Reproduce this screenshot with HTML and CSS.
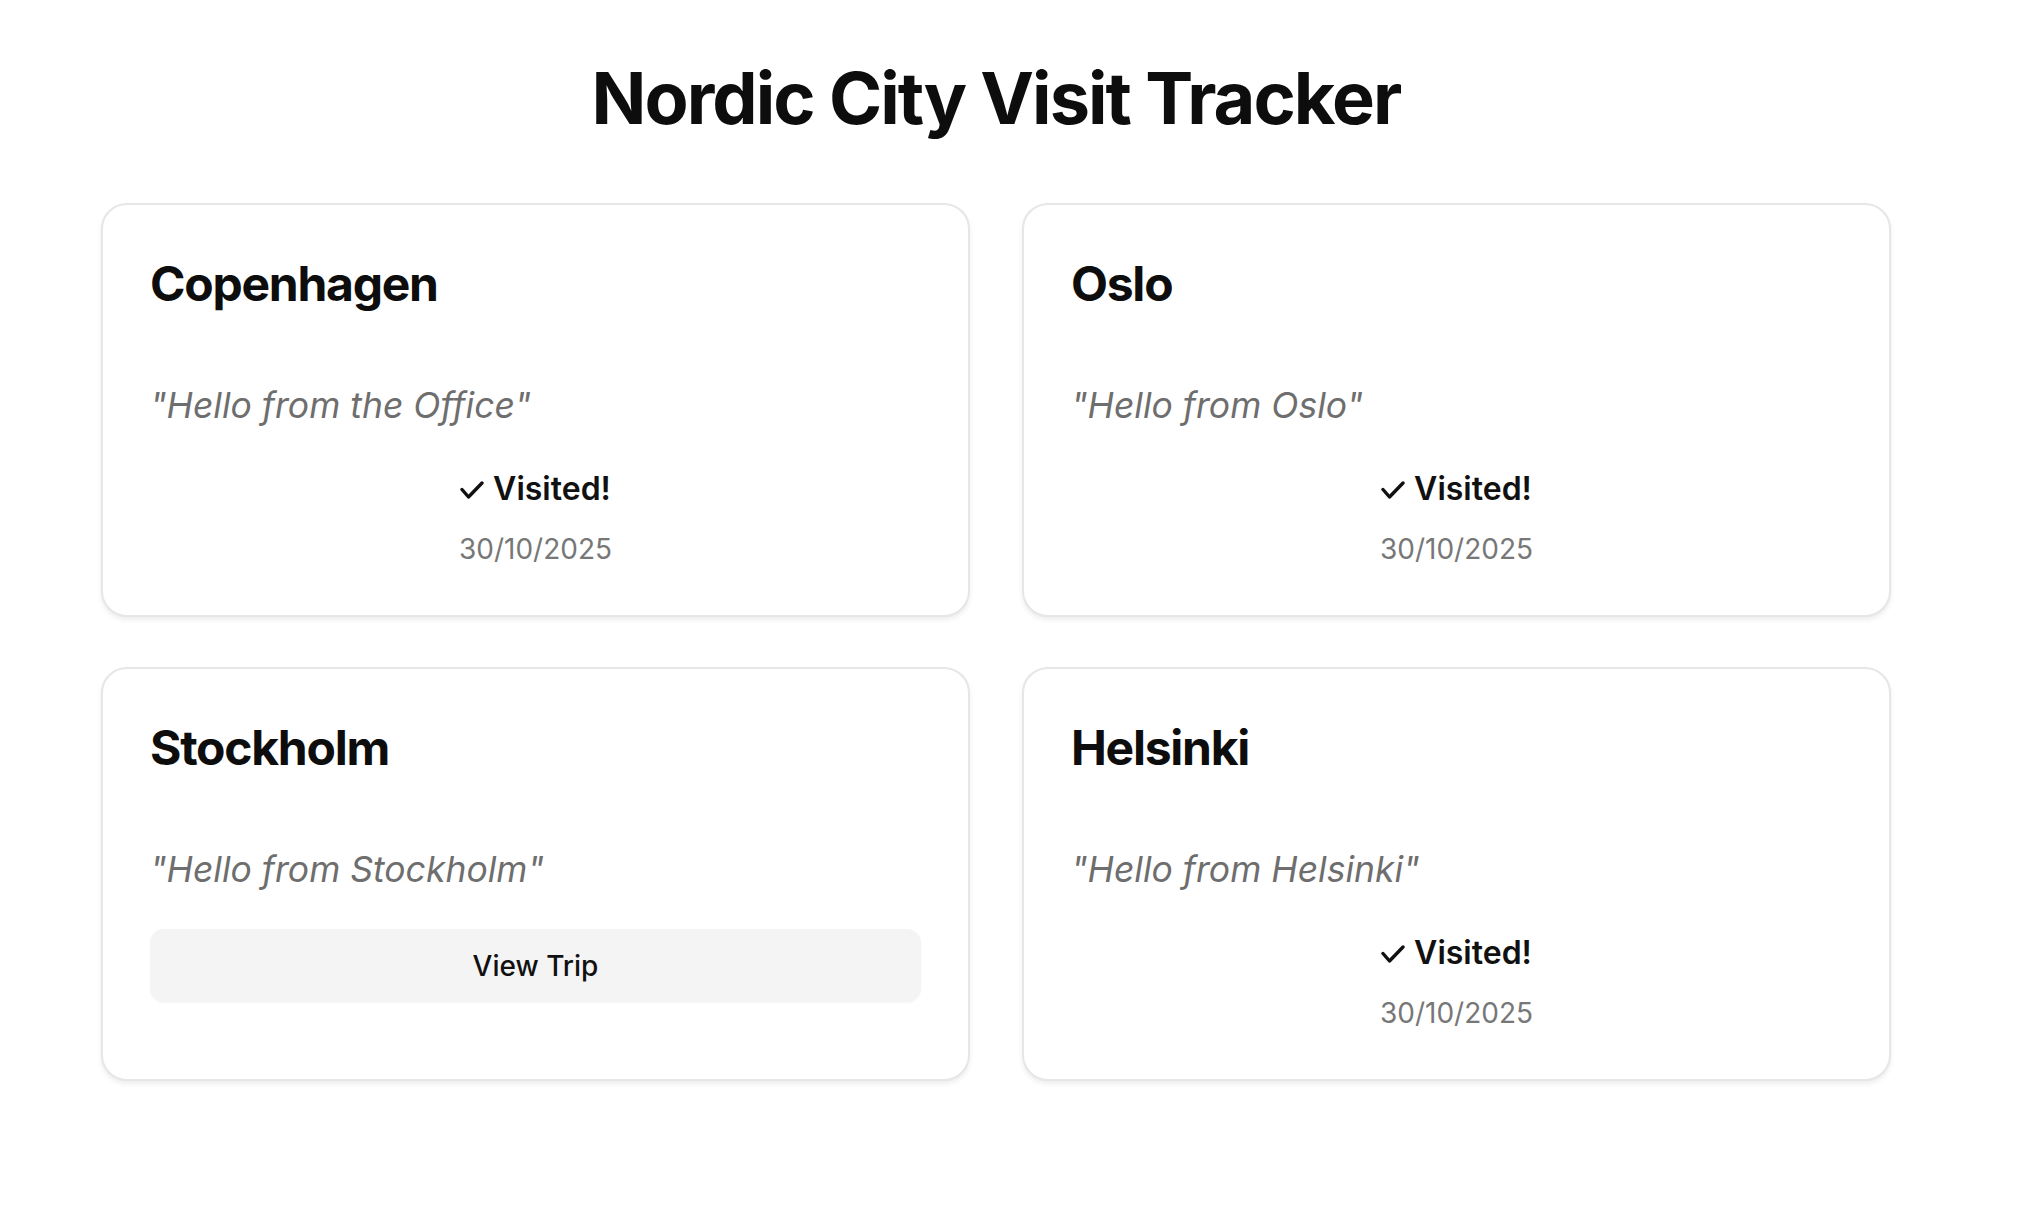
FILE: index.html
```html
<!DOCTYPE html>
<html lang="en">
<head>
<meta charset="utf-8">
<title>Nordic City Visit Tracker</title>
<link rel="stylesheet" href="styles.css">
</head>
<body>
<main class="page">
  <h1 class="title">Nordic City Visit Tracker</h1>
  <section class="grid">
    <article class="card">
      <h2 class="city">Copenhagen</h2>
      <p class="quote">"Hello from the Office"</p>
      <div class="status">
        <div class="visited"><svg class="check" viewBox="0 0 24 18" aria-hidden="true"><polyline points="2,8.5 8.5,16 22,2"/></svg>Visited!</div>
        <div class="date">30/10/2025</div>
      </div>
    </article>
    <article class="card">
      <h2 class="city">Oslo</h2>
      <p class="quote">"Hello from Oslo"</p>
      <div class="status">
        <div class="visited"><svg class="check" viewBox="0 0 24 18" aria-hidden="true"><polyline points="2,8.5 8.5,16 22,2"/></svg>Visited!</div>
        <div class="date">30/10/2025</div>
      </div>
    </article>
    <article class="card">
      <h2 class="city">Stockholm</h2>
      <p class="quote">"Hello from Stockholm"</p>
      <div class="status">
        <button class="btn" type="button">View Trip</button>
      </div>
    </article>
    <article class="card">
      <h2 class="city">Helsinki</h2>
      <p class="quote">"Hello from Helsinki"</p>
      <div class="status">
        <div class="visited"><svg class="check" viewBox="0 0 24 18" aria-hidden="true"><polyline points="2,8.5 8.5,16 22,2"/></svg>Visited!</div>
        <div class="date">30/10/2025</div>
      </div>
    </article>
  </section>
</main>
</body>
</html>
```
FILE: styles.css
```css
* { box-sizing: border-box; }

body {
  margin: 0;
  background: #ffffff;
  color: #111111;
  font-family: Inter, "Noto Sans", "Liberation Sans", sans-serif;
}

.page {
  width: 1790px;
  margin-left: 101px;
  padding-bottom: 120px;
}

.title {
  margin: 54px 0 62px;
  text-align: center;
  font-size: 72px;
  font-weight: 700;
  letter-spacing: -0.027em;
  line-height: normal;
  color: #0d0d0d;
}

.grid {
  display: grid;
  grid-template-columns: 1fr 1fr;
  gap: 50px 52px;
}

.card {
  border: 2px solid #e6e6e6;
  border-radius: 26px;
  padding: 49px 47px 47px;
  background: #ffffff;
  box-shadow: 0 3px 5px rgba(0, 0, 0, 0.07);
  min-height: 414px;
}

.city {
  margin: 0;
  font-size: 48px;
  font-weight: 700;
  letter-spacing: -0.026em;
  line-height: normal;
  color: #0d0d0d;
}

.quote {
  margin: 73px 0 0;
  font-size: 35.5px;
  font-style: italic;
  line-height: 40px;
  color: #6e6e6e;
}

.status {
  margin-top: 39px;
  display: flex;
  flex-direction: column;
  align-items: center;
}

.visited {
  display: flex;
  align-items: center;
  gap: 9px;
  padding-top: 4px;
  font-size: 32px;
  font-weight: 600;
  line-height: 39px;
  color: #111111;
}

.check {
  width: 24px;
  height: 18px;
  margin-top: 2px;
  fill: none;
  stroke: #111111;
  stroke-width: 3.4;
  stroke-linecap: round;
  stroke-linejoin: round;
}

.date {
  margin-top: 24px;
  font-size: 28px;
  line-height: 34px;
  color: #777777;
}

.btn {
  width: 100%;
  height: 73px;
  border: none;
  border-radius: 14px;
  background: #f4f4f4;
  font-family: Inter, "Noto Sans", sans-serif;
  font-size: 28px;
  font-weight: 500;
  color: #111111;
  box-shadow: 0 1px 2px rgba(0, 0, 0, 0.04);
}
```
